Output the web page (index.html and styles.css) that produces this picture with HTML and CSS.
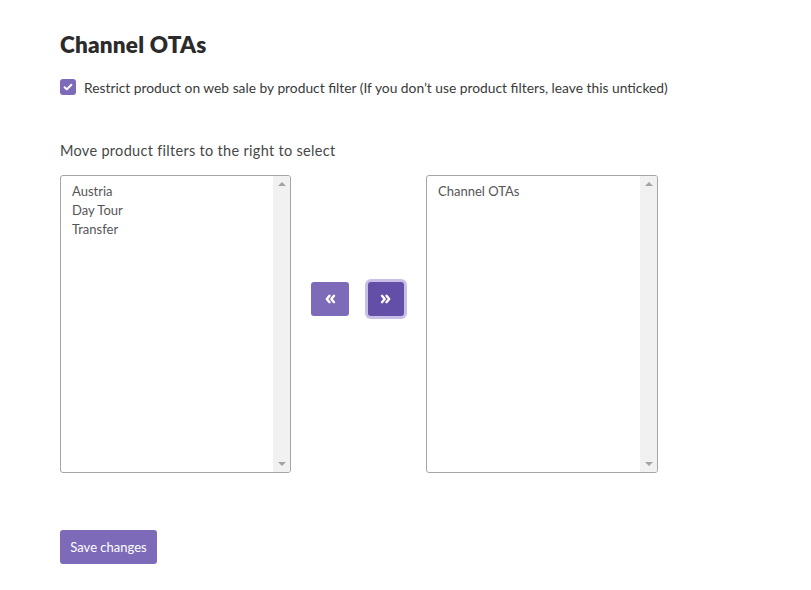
FILE: index.html
```html
<!DOCTYPE html>
<html lang="en">
<head>
<meta charset="utf-8">
<title>Channel OTAs</title>
<link rel="stylesheet" href="styles.css">
</head>
<body>
<main class="page">
  <h1 class="title">Channel OTAs</h1>
  <label class="check-row">
    <span class="checkbox">
      <svg viewBox="0 0 16 16" width="16" height="16"><path d="M4.6 8.2l2.2 2.2 4.6-4.6" fill="none" stroke="#fff" stroke-width="2" stroke-linecap="round" stroke-linejoin="round"/></svg>
    </span>
    <span class="check-text">Restrict product on web sale by product filter (If you don’t use product filters, leave this unticked)</span>
  </label>

  <p class="hint">Move product filters to the right to select</p>

  <div class="picker">
    <div class="listbox">
      <ul class="items">
        <li>Austria</li>
        <li>Day Tour</li>
        <li>Transfer</li>
      </ul>
      <div class="scrollbar"><span class="arrow up"></span><span class="arrow down"></span></div>
    </div>
    <div class="moves">
      <button class="move" type="button" aria-label="Move left">
        <svg viewBox="0 0 12 10" width="12" height="10"><path d="M5.5 1.8L2.8 5l2.7 3.2M10 1.8L7.3 5l2.7 3.2" fill="none" stroke="#fff" stroke-width="2.4" stroke-linecap="round" stroke-linejoin="round"/></svg>
      </button>
      <button class="move active" type="button" aria-label="Move right">
        <svg viewBox="0 0 12 10" width="12" height="10"><path d="M2 1.8L4.7 5 2 8.2M6.5 1.8L9.2 5 6.5 8.2" fill="none" stroke="#fff" stroke-width="2.4" stroke-linecap="round" stroke-linejoin="round"/></svg>
      </button>
    </div>
    <div class="listbox">
      <ul class="items">
        <li>Channel OTAs</li>
      </ul>
      <div class="scrollbar"><span class="arrow up"></span><span class="arrow down"></span></div>
    </div>
  </div>

  <button class="save" type="button">Save changes</button>
</main>
</body>
</html>
```

FILE: styles.css
```css
* { box-sizing: border-box; }
html, body { margin: 0; background: #fff; }
body {
  font-family: Lato, "Open Sans", "Liberation Sans", sans-serif;
  color: #3a3a3a;
}
.page {
  padding: 30px 0 0 60px;
}
.title {
  margin: 0;
  font-size: 22.5px;
  line-height: 30px;
  font-weight: 800;
  color: #2b2b2b;
  letter-spacing: 0.2px;
}
.check-row {
  display: flex;
  align-items: center;
  gap: 8px;
  margin-top: 18px;
  height: 18px;
}
.checkbox {
  width: 16px;
  height: 16px;
  border-radius: 3px;
  background: #7d6bba;
  display: flex;
}
.check-text {
  font-size: 13.8px;
  color: #3a3a3a;
}
.hint {
  margin: 45px 0 0;
  font-size: 14.5px;
  line-height: 20px;
  color: #474747;
  letter-spacing: 0.3px;
}
.picker {
  display: flex;
  margin-top: 14px;
}
.listbox {
  width: 231px;
  height: 298px;
  border: 1px solid #a5a5a5;
  border-radius: 3px;
  display: flex;
  overflow: hidden;
}
.listbox:last-child { width: 232px; }
.items {
  list-style: none;
  margin: 0;
  padding: 6px 11px;
  flex: 1;
  font-size: 13px;
  line-height: 19px;
  color: #555;
}
.scrollbar {
  width: 17px;
  background: #f1f1f1;
  display: flex;
  flex-direction: column;
  justify-content: space-between;
  align-items: center;
  padding: 6px 0;
}
.arrow {
  width: 0;
  height: 0;
  border-left: 4px solid transparent;
  border-right: 4px solid transparent;
}
.arrow.up { border-bottom: 4px solid #a3a3a3; }
.arrow.down { border-top: 4px solid #a3a3a3; }
.moves {
  width: 135px;
  display: flex;
  gap: 19px;
  padding: 107px 0 0 20px;
  align-items: flex-start;
}
.move {
  width: 38px;
  height: 34px;
  border: 0;
  border-radius: 3px;
  background: #7d6bba;
  display: flex;
  align-items: center;
  justify-content: center;
  padding: 0;
}
.move.active {
  width: 36px;
  background: #634ea8;
  box-shadow: 0 0 0 3px #c9bfe6;
}
.save {
  margin-top: 57px;
  width: 97px;
  height: 34px;
  border: 0;
  border-radius: 3px;
  background: #7d6bba;
  color: #fff;
  font-family: Lato, "Open Sans", "Liberation Sans", sans-serif;
  font-size: 13px;
  padding: 0;
}
```
